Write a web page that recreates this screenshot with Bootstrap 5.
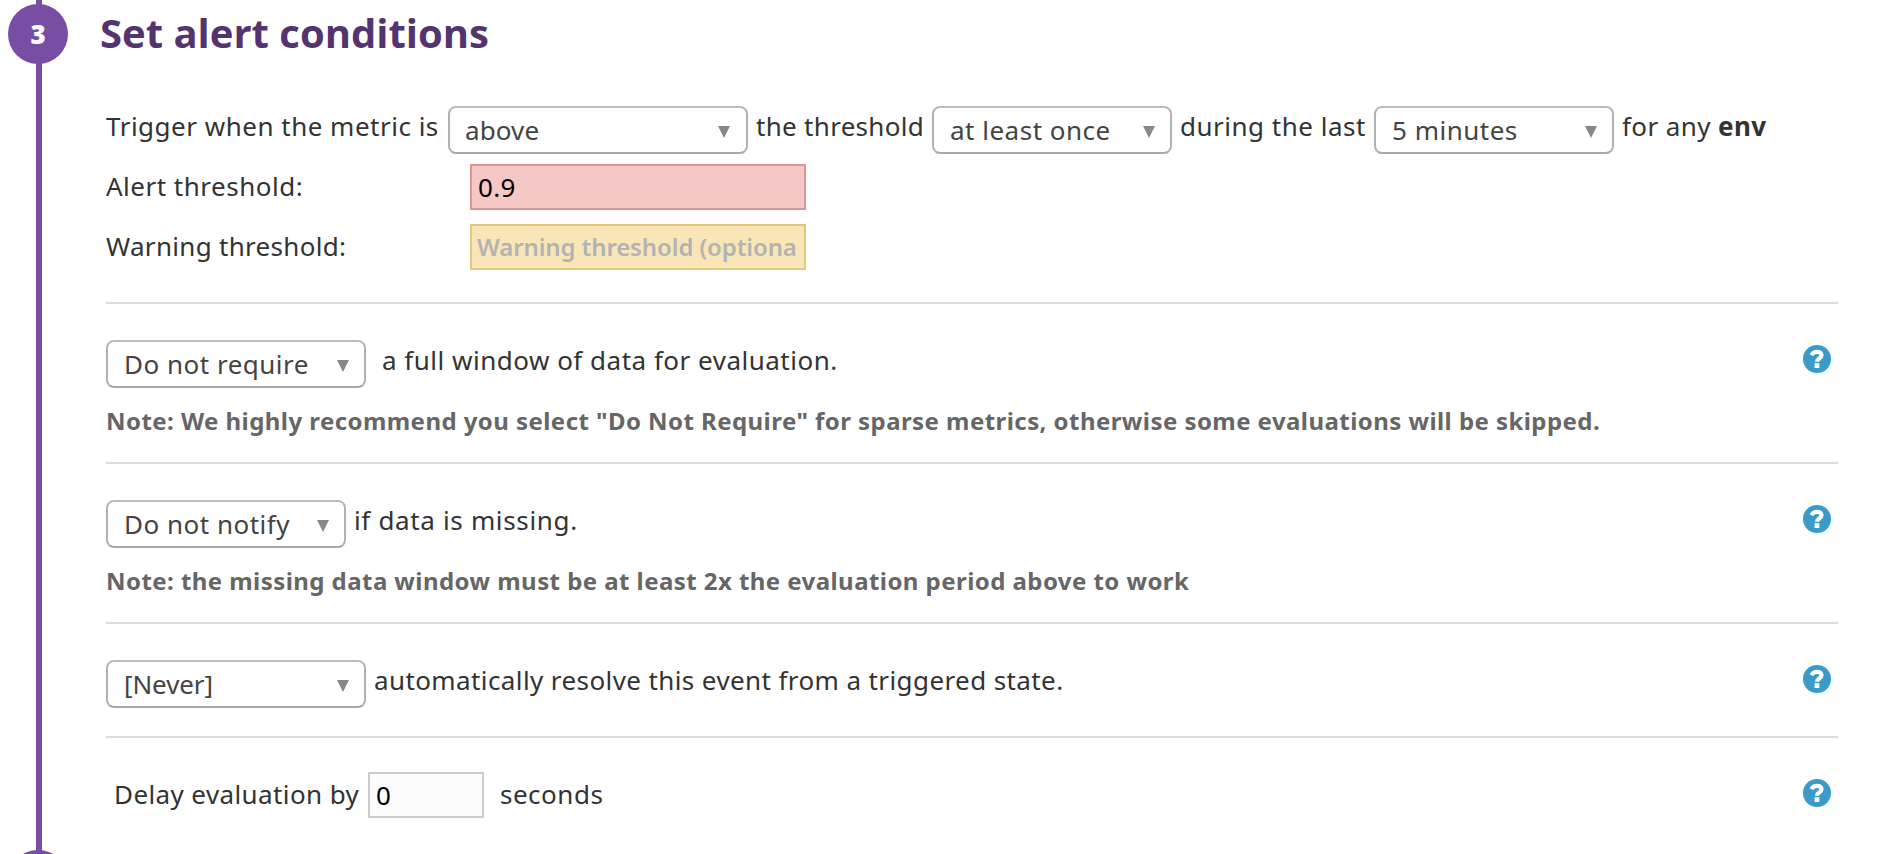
<!DOCTYPE html>
<html lang="en">
<head>
<meta charset="utf-8">
<meta name="viewport" content="width=device-width, initial-scale=1">
<title>Set alert conditions</title>
<link href="https://cdn.jsdelivr.net/npm/bootstrap@5.3.0/dist/css/bootstrap.min.css" rel="stylesheet">
<style>
  body { font-family: "Noto Sans", sans-serif; font-size: 26px; line-height: 40px; letter-spacing: .5px; color: #333; background: #fff; }
  .wizard { height: 854px; }
  .rail { width: 98px; background: linear-gradient(#774ea3, #774ea3) 36px 0 / 6px 100% no-repeat; }
  .step-dot { width: 60px; height: 60px; margin-left: 8px; background: #774ea3; color: #fff; font: 800 26px/60px "Open Sans", sans-serif; letter-spacing: 0; }
  .step-first { margin-top: 4px; }
  .step-next { margin-bottom: -56px; }
  .step-title { margin: 5px 0 0 2px; font: 700 40px/56px "Open Sans", sans-serif; letter-spacing: 0; color: #53346f; }
  .conditions { width: 1732px; margin-left: 8px; }
  .rule { border-bottom: 2px solid #ddd; }
  .rule-threshold { padding-top: 45px; height: 243px; }
  .rule-note { padding-top: 36px; height: 160px; }
  .rule-resolve { padding-top: 36px; height: 114px; }
  .rule-delay { padding-top: 34px; }
  .sentence { display: grid; grid-auto-flow: column; justify-content: start; white-space: nowrap; height: 48px; }
  .trigger { grid-template-columns: 342px 300px 184px 240px 202px 240px auto; }
  .delay { grid-template-columns: 262px 116px auto; }
  .delay label, .delay span, .thresholds label { margin-top: 2px; }
  .picker.form-select { height: 48px; padding: 0 40px 0 16px; font-size: 26px; line-height: 44px; letter-spacing: .5px; color: #444; border: 2px solid; border-color: #bbb #b2b2b2 #a8a8a8; border-radius: 8px;
    background: #fff url("data:image/svg+xml,%3Csvg xmlns='http://www.w3.org/2000/svg' viewBox='0 0 12 12'%3E%3Cpath fill='%23888' d='M0 0h12L6 12z'/%3E%3C/svg%3E") no-repeat right 15px top 18px / 12px 12px; }
  .picker-260 { width: 260px; }
  .picker-240 { width: 240px; }
  .picker-short.form-select { padding-left: 15px; background-position: right 16px top 18px; letter-spacing: .1px; }
  .after { padding-left: 8px; }
  .snug { letter-spacing: .4px; }
  .snugger { letter-spacing: .3px; }
  .airy { letter-spacing: .66px; }
  .never { letter-spacing: -.1px !important; }
  .thresholds { display: grid; grid-template-columns: 364px 336px; row-gap: 14px; margin-top: 10px; }
  .thresholds label { height: 40px; }
  .field.form-control { height: 46px; padding: 0 6px; font-size: 26px; line-height: 42px; letter-spacing: 0; color: #000; border: 2px solid #ccc; border-radius: 0; background: #fcfcfc; }
  .field-alert.form-control { background: #f5c7c5; border-color: #dd9792; letter-spacing: .3px; }
  .field-warn.form-control { padding: 0 6px 2px 5px; background: #f9e6b6; border-color: #e0c880; font-size: 24px; font-weight: 600; letter-spacing: -.12px; }
  .field-warn::placeholder { color: #b3b3b3; opacity: 1; }
  .note { margin-top: 13px; font-size: 24px; font-weight: 700; letter-spacing: .44px; color: #666; white-space: nowrap; }
  .help { width: 28px; height: 28px; margin: 5px 7px 0 0; }
  .rule-delay .help { margin-top: 7px; }
</style>
</head>
<body class="overflow-hidden">
<svg class="d-none">
  <symbol id="help-icon" viewBox="0 0 28 28"><circle cx="14" cy="14" r="14" fill="#3a9bcb"/><path d="M8.6 10.3C9.6 7.900 11.400 6.900 13.800 6.900c2.700 0 4.700 1.200 4.700 3.500 0 3-4.600 3.100-4.600 6.400" fill="none" stroke="#fff" stroke-width="4.200"/><path fill="#fff" d="M11.600 18.200h4.700v4.800h-4.700z"/></symbol>
</svg>
<main class="wizard d-flex overflow-hidden">
  <div class="rail d-flex flex-column justify-content-between flex-shrink-0">
    <div class="step-dot step-first rounded-circle text-center">3</div>
    <div class="step-dot step-next rounded-circle flex-shrink-0"></div>
  </div>
  <div>
    <h1 class="step-title">Set alert conditions</h1>
    <form class="conditions">
      <section class="rule rule-threshold">
        <div class="sentence trigger">
          <span>Trigger when the metric is</span>
          <select class="form-select picker picker-short" aria-label="Comparison"><option>above</option></select>
          <span class="after snugger">the threshold</span>
          <select class="form-select picker" aria-label="Frequency"><option>at least once</option></select>
          <span class="after">during the last</span>
          <select class="form-select picker" aria-label="Window"><option>5 minutes</option></select>
          <span class="after snug">for any <b>env</b></span>
        </div>
        <div class="thresholds">
          <label for="alert">Alert threshold:</label>
          <input class="form-control field field-alert" id="alert" value="0.9">
          <label class="snugger" for="warning">Warning threshold:</label>
          <input class="form-control field field-warn" id="warning" placeholder="Warning threshold (optional)">
        </div>
      </section>

      <section class="rule rule-note">
        <div class="d-flex justify-content-between">
          <div class="sentence">
            <select class="form-select picker picker-260" aria-label="Full window"><option>Do not require</option></select>
            <span class="after ms-2">a full window of data for evaluation.</span>
          </div>
          <svg class="help"><use href="#help-icon"/></svg>
        </div>
        <p class="note mb-0">Note: We highly recommend you select "Do Not Require" for sparse metrics, otherwise some evaluations will be skipped.</p>
      </section>

      <section class="rule rule-note">
        <div class="d-flex justify-content-between">
          <div class="sentence">
            <select class="form-select picker picker-240" aria-label="Missing data"><option>Do not notify</option></select>
            <span class="after airy">if data is missing.</span>
          </div>
          <svg class="help"><use href="#help-icon"/></svg>
        </div>
        <p class="note mb-0">Note: the missing data window must be at least 2x the evaluation period above to work</p>
      </section>

      <section class="rule rule-resolve">
        <div class="d-flex justify-content-between">
          <div class="sentence">
            <select class="form-select picker picker-260 never" aria-label="Auto resolve"><option>[Never]</option></select>
            <span class="after snug">automatically resolve this event from a triggered state.</span>
          </div>
          <svg class="help"><use href="#help-icon"/></svg>
        </div>
      </section>

      <section class="rule-delay">
        <div class="d-flex justify-content-between">
          <div class="sentence delay">
            <label class="after snug" for="delay">Delay evaluation by</label>
            <input class="form-control field" id="delay" value="0">
            <span class="after ms-2">seconds</span>
          </div>
          <svg class="help"><use href="#help-icon"/></svg>
        </div>
      </section>
    </form>
  </div>
</main>
<script src="https://cdn.jsdelivr.net/npm/bootstrap@5.3.0/dist/js/bootstrap.bundle.min.js"></script>
</body>
</html>
